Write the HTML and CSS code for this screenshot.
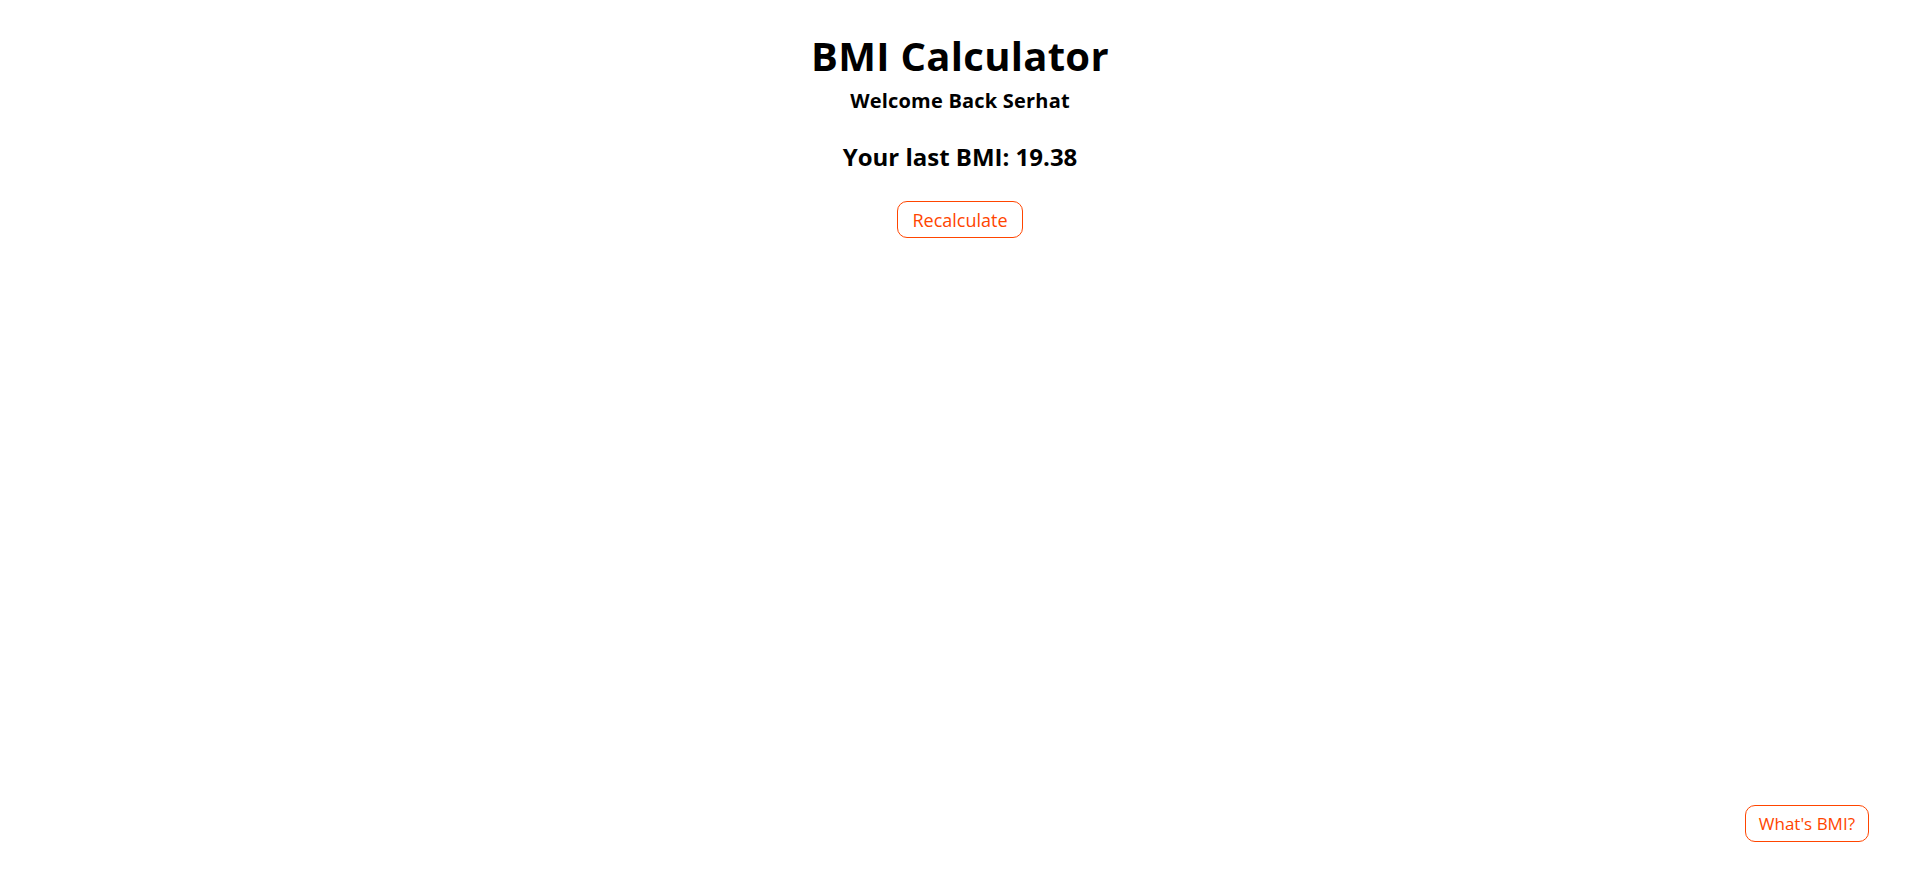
FILE: index.html
```html
<!DOCTYPE html>
<html lang="en">
<head>
<meta charset="utf-8">
<title>BMI Calculator</title>
<link rel="stylesheet" href="styles.css">
</head>
<body>
<main class="app">
  <h1 class="title">BMI Calculator</h1>
  <h2 class="welcome">Welcome Back Serhat</h2>
  <h2 class="last-bmi">Your last BMI: 19.38</h2>
  <button class="btn">Recalculate</button>
</main>
<button class="btn info-btn">What's BMI?</button>
</body>
</html>
```

FILE: styles.css
```css
html, body {
  margin: 0;
  padding: 0;
  background: #fff;
}
body {
  font-family: "Open Sans", "Liberation Sans", sans-serif;
  color: #000;
}
.app {
  display: flex;
  flex-direction: column;
  align-items: center;
  padding-top: 26px;
}
.title {
  margin: 0;
  font-size: 40px;
  font-weight: 700;
  line-height: 60px;
  letter-spacing: 0.3px;
}
.welcome {
  margin: 0;
  font-size: 20px;
  font-weight: 700;
  line-height: 30px;
  letter-spacing: 0.2px;
}
.last-bmi {
  margin: 23px 0 0;
  font-size: 24px;
  font-weight: 700;
  line-height: 36px;
}
.btn {
  font-family: inherit;
  font-size: 18px;
  color: #ff4500;
  background: #fff;
  border: 1px solid #ff4500;
  border-radius: 10px;
  padding: 4px 14px;
  height: 37px;
  cursor: pointer;
}
.app .btn {
  margin-top: 26px;
}
.info-btn {
  position: fixed;
  right: 51px;
  bottom: 49px;
  padding: 4px 13px;
  font-size: 17px;
}
```
